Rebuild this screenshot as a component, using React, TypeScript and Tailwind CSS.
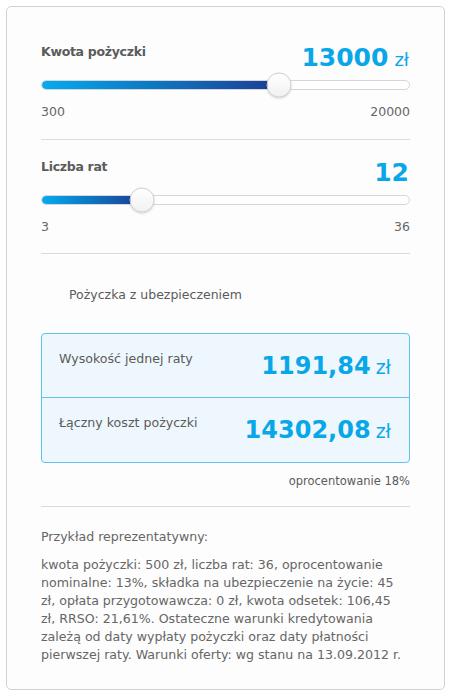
const font = { fontFamily: '"DejaVu Sans", Verdana, sans-serif' };

function Slider({ percent }: { percent: number }) {
  return (
    <div className="relative h-[10px]">
      <div className="h-[10px] rounded-full border border-[#d6d6d6] bg-white overflow-hidden">
        <div
          className="h-full rounded-l-full border-r border-[#17388a] bg-gradient-to-r from-[#05abee] via-[#0d74c0] to-[#1a3d94]"
          style={{ width: `${percent}%` }}
        />
      </div>
      <div
        className="absolute top-1/2 w-[25px] h-[25px] -translate-x-1/2 -translate-y-1/2 rounded-full border border-[#cfcfcf] bg-gradient-to-b from-white to-[#f1f1f1] shadow-[0_1px_2px_rgba(0,0,0,0.18)]"
        style={{ left: `${percent}%` }}
      />
    </div>
  );
}

function SliderBlock({
  label,
  value,
  unit,
  min,
  max,
  percent,
}: {
  label: string;
  value: string;
  unit?: string;
  min: string;
  max: string;
  percent: number;
}) {
  return (
    <div>
      <div className="flex justify-between items-start h-[36px]">
        <span className="text-[12.5px] font-bold tracking-[-0.3px] text-[#5b5b5b] leading-4">{label}</span>
        <span className="text-[#09a7e8] whitespace-nowrap mt-[2px] mr-[1px]">
          <span className="text-[25px] font-bold leading-[24px]">{value}</span>
          {unit && <span className="text-[18px] leading-[24px] ml-[6px]">{unit}</span>}
        </span>
      </div>
      <Slider percent={percent} />
      <div className="flex justify-between text-[12.5px] text-[#666] leading-4 mt-[14px]">
        <span>{min}</span>
        <span>{max}</span>
      </div>
    </div>
  );
}

function ResultRow({ label, value, last }: { label: string; value: string; last?: boolean }) {
  return (
    <div className={`flex justify-between items-start h-[64px] pl-[17px] pr-[18px] ${last ? '' : 'border-b border-[#5cc3ee]'}`}>
      <span className="text-[12.6px] text-[#5b5b5b] leading-4 mt-[17px]">{label}</span>
      <span className="text-[#09a7e8] whitespace-nowrap mt-[19px]">
        <span className="text-[24px] font-bold leading-[26px]">{value}</span>
        <span className="text-[19px] leading-[26px] ml-[5px]">zł</span>
      </span>
    </div>
  );
}

export default function App() {
  return (
    <div className="min-h-screen bg-white pt-[6px] pl-[6px]" style={font}>
      <div className="w-[439px] h-[684px] rounded-[5px] border border-[#d2d2d2] bg-[#fdfdfd] px-[34px] pt-[37px]">
        <SliderBlock label="Kwota pożyczki" value="13000" unit="zł" min="300" max="20000" percent={64.5} />
        <div className="border-t border-[#dcdcdc] mt-[19px] mb-[19px]" />
        <SliderBlock label="Liczba rat" value="12" min="3" max="36" percent={27.5} />
        <div className="border-t border-[#dcdcdc] mt-[18px]" />

        <div className="pl-[28px] pt-[33px] text-[12.5px] text-[#5b5b5b] leading-4">Pożyczka z ubezpieczeniem</div>

        <div className="mt-[30px] rounded-[4px] border border-[#5cc3ee] bg-[#eef7fd]">
          <ResultRow label="Wysokość jednej raty" value="1191,84" />
          <ResultRow label="Łączny koszt pożyczki" value="14302,08" last />
        </div>

        <div className="text-right text-[11.5px] text-[#5b5b5b] leading-4 mt-[10px]">oprocentowanie 18%</div>
        <div className="border-t border-[#dcdcdc] mt-[17px]" />

        <div className="text-[12.6px] text-[#666] leading-[18px] mt-[21px]">
          <p>Przykład reprezentatywny:</p>
          <p className="mt-[10px]">
            kwota pożyczki: 500 zł, liczba rat: 36, oprocentowanie
            <br />
            nominalne: 13%, składka na ubezpieczenie na życie: 45
            <br />
            zł, opłata przygotowawcza: 0 zł, kwota odsetek: 106,45
            <br />
            zł, RRSO: 21,61%. Ostateczne warunki kredytowania
            <br />
            zależą od daty wypłaty pożyczki oraz daty płatności
            <br />
            pierwszej raty. Warunki oferty: wg stanu na 13.09.2012 r.
          </p>
        </div>
      </div>
    </div>
  );
}
